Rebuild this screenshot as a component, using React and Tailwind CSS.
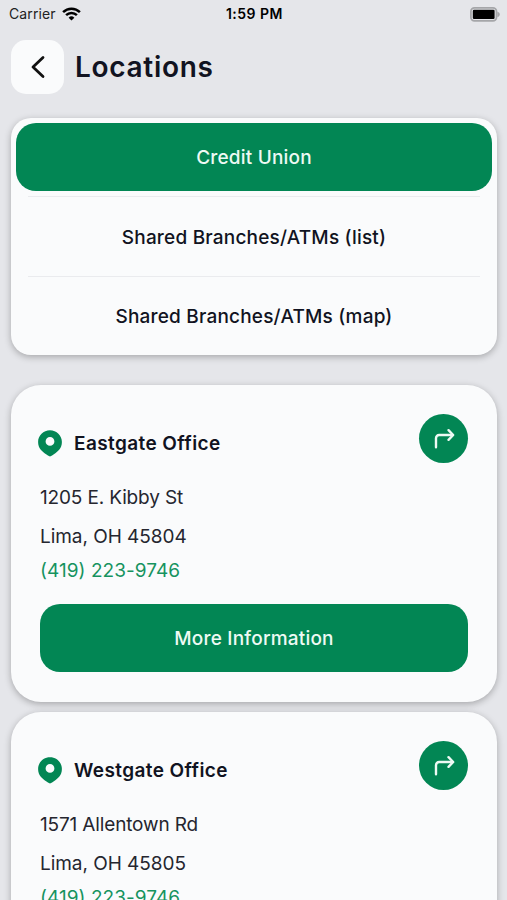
import React, { useState } from "react";

const tabs = [
  { id: "cu", label: "Credit Union" },
  { id: "list", label: "Shared Branches/ATMs (list)" },
  { id: "map", label: "Shared Branches/ATMs (map)" },
];

const offices = [
  {
    name: "Eastgate Office",
    street: "1205 E. Kibby St",
    city: "Lima, OH 45804",
    phone: "(419) 223-9746",
  },
  {
    name: "Westgate Office",
    street: "1571 Allentown Rd",
    city: "Lima, OH 45805",
    phone: "(419) 223-9746",
  },
];

const App = () => {
  const [activeTab, setActiveTab] = useState("cu");

  return (
    <div className="h-[900px] w-[507px] overflow-hidden bg-[#e5e6ea] font-['Inter',sans-serif] text-[#111321]">
      <StatusBar />

      {/* --- HEADER --- */}
      <header className="flex items-center gap-[11px] px-[11px] pt-3">
        <button className="flex h-[54px] w-[53px] items-center justify-center rounded-[15px] bg-[#fafbfc]">
          <BackIcon />
        </button>
        <h1 className="text-[28px] font-semibold leading-none tracking-[0.7px]">Locations</h1>
      </header>

      {/* --- TABS --- */}
      <nav className="ml-[11px] mr-[10px] mt-6 h-[237px] rounded-[20px] bg-[#fafbfc] px-[5px] pt-[5px] shadow-[0_2px_7px_rgba(0,0,0,0.28)]">
        {tabs.map((tab) => (
          <TabItem
            key={tab.id}
            label={tab.label}
            active={tab.id === activeTab}
            onClick={() => setActiveTab(tab.id)}
          />
        ))}
      </nav>

      {/* --- OFFICES --- */}
      <main className="ml-[11px] mr-[10px] mt-[30px] flex flex-col gap-[10px]">
        {offices.map((office) => (
          <OfficeCard key={office.name} office={office} />
        ))}
      </main>
    </div>
  );
};

const StatusBar = () => (
  <div className="grid h-7 grid-cols-3 items-center pl-[9px] pr-[7px] text-[14px] leading-none text-[#222]">
    <div className="flex items-center gap-[6px]">
      <span className="tracking-[0.1px]">Carrier</span>
      <svg width="19" height="14" viewBox="0 0 19 14" fill="none" stroke="#000" strokeWidth="2.5">
        <path d="M1.1 5.1a12 12 0 0 1 16.8 0" />
        <path d="M4.1 8.2a7.7 7.7 0 0 1 10.8 0" />
        <path d="M9.5 13.6 6.6 10.7a4.1 4.1 0 0 1 5.8 0z" fill="#000" stroke="none" />
      </svg>
    </div>
    <span className="text-center font-semibold tracking-[0.5px] text-black">1:59 PM</span>
    <div className="flex justify-end">
      <svg width="30" height="15" viewBox="0 0 30 15">
        <rect x="0.9" y="0.9" width="25.6" height="13" rx="3.6" fill="none" stroke="#a5a6a9" strokeWidth="1.8" />
        <rect x="2.8" y="2.8" width="21.8" height="9.2" rx="1.2" fill="#000" />
        <path d="M27.4 4.8c1.6.5 2.4 1.5 2.4 2.600s-.8 2.100-2.400 2.600z" fill="#a5a6a9" />
      </svg>
    </div>
  </div>
);

/* --- TAB ROW --- */
const TabItem = ({ label, active, onClick }) =>
  active ? (
    <button
      onClick={onClick}
      className="mb-[5px] flex h-[68px] w-full items-center justify-center rounded-[20px] bg-[#028654] pt-[3px] text-[19px] font-medium tracking-[0.2px] text-[#eefaf4]"
    >
      {label}
    </button>
  ) : (
    <button
      onClick={onClick}
      className="mx-3 flex h-[79.5px] w-[452px] items-center justify-center border-t-[1.5px] border-[#eaebee] pt-[3px] text-[19px] font-medium tracking-[0.2px]"
    >
      {label}
    </button>
  );

/* --- OFFICE CARD --- */
const OfficeCard = ({ office }) => (
  <section className="h-[317px] shrink-0 rounded-[30px] bg-[#fafbfc] px-[29px] pt-[29px] shadow-[0_2px_7px_rgba(0,0,0,0.28)]">
    <div className="flex h-[49px] items-start justify-between">
      <div className="flex items-center pt-4">
        <PinIcon />
        <h2 className="ml-3 text-[19px] font-semibold leading-[27px] tracking-[0.4px]">{office.name}</h2>
      </div>
      <button className="flex size-[49px] items-center justify-center rounded-full bg-[#028654]">
        <TurnIcon />
      </button>
    </div>
    <address className="mt-[21px] text-[19px] not-italic leading-7 text-[#25262f]">
      <p className="tracking-[-0.15px]">{office.street}</p>
      <p className="mt-[11px] tracking-[-0.05px]">{office.city}</p>
      <a className="mt-[6px] block tracking-[0.05px] text-[#16935f]">{office.phone}</a>
    </address>
    <button className="mt-[19px] flex h-[68px] w-full items-center justify-center rounded-[20px] bg-[#028654] pt-[3px] text-[19px] font-medium tracking-[0.2px] text-[#eefaf4]">
      More Information
    </button>
  </section>
);

const BackIcon = () => (
  <svg
    width="16"
    height="24"
    viewBox="0 0 16 24"
    fill="none"
    stroke="#111"
    strokeWidth="2.8"
    strokeLinecap="round"
    strokeLinejoin="round"
  >
    <path d="M13 2.500 3 12l10 9.500" />
  </svg>
);

const PinIcon = () => (
  <svg width="24" height="27" viewBox="0 0 24 27" className="-ml-[2px]">
    <path
      fill="#028654"
      fillRule="evenodd"
      d="M12 .3C5.4.3.1 5.5.1 12c0 6.200 4 9.500 8 12.300 1.200.8 2.400 1.700 3.900 2.300 1.500-.6 2.700-1.500 3.900-2.300 4-2.800 8-6.100 8-12.300C23.900 5.500 18.600.3 12 .3Zm0 6.700a4.400 4.400 0 1 1 0 8.800 4.400 4.400 0 0 1 0-8.800Z"
    />
  </svg>
);

const TurnIcon = () => (
  <svg
    width="24"
    height="24"
    viewBox="0 0 24 24"
    fill="none"
    stroke="#eefaf4"
    strokeWidth="2.4"
    strokeLinecap="round"
    strokeLinejoin="round"
  >
    <path d="M4 20.300V11.200A3.200 3.200 0 0 1 7.200 8h13.300" />
    <path d="m16.500 3.200 4.700 4.800-4.700 4.800" />
  </svg>
);

export default App;
